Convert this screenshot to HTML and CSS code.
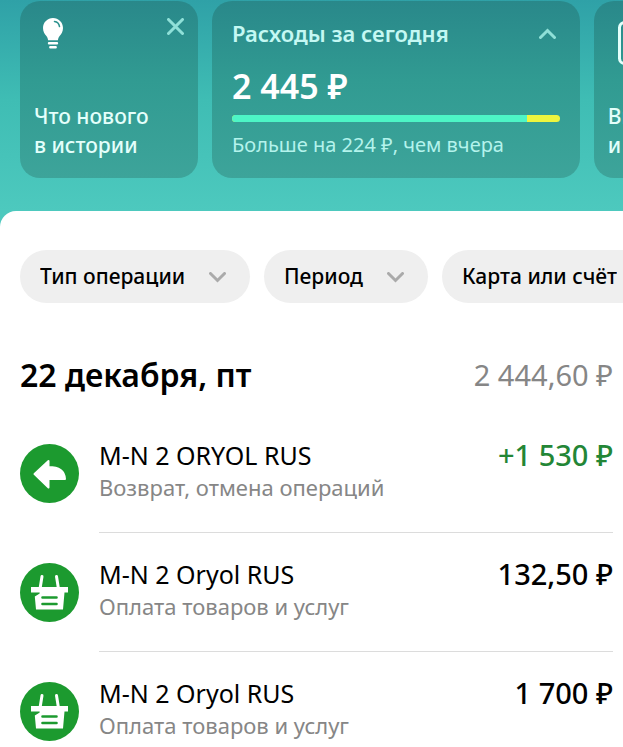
FILE: index.html
```html
<!DOCTYPE html>
<html lang="ru">
<head>
    <meta charset="UTF-8">
    <meta name="viewport" content="width=device-width, initial-scale=1.0">
    <title>История операций</title>
    <link rel="stylesheet" href="styles.css">
</head>
<body>
    <header class="cards">
        <section class="card story-card">
            <div class="card-top">
                <svg class="bulb" viewBox="0 0 20 31" aria-hidden="true">
                    <path fill="#fff" d="M10 0C4.500 0 0 4.400 0 9.900c0 3.900 1.700 5.900 3.400 8 1 1.300 1.500 2.600 1.700 4.400h9.800c.2-1.800.7-3.100 1.700-4.400 1.700-2.100 3.400-4.100 3.400-8C20 4.400 15.500 0 10 0z"/>
                    <path stroke="#2b918d" stroke-width="1.500" stroke-linecap="round" fill="none" d="M11.500 3.600c2.700.4 4.600 2.300 5 5"/>
                    <path stroke="#fff" stroke-width="2.400" stroke-linecap="round" d="M6 25.300h8M7.300 29.200h5.400"/>
                </svg>
                <button class="icon-button" aria-label="Закрыть">
                    <svg width="17" height="17" viewBox="0 0 17 17" aria-hidden="true">
                        <path d="M1.500 1.500l14 14M15.500 1.500l-14 14"/>
                    </svg>
                </button>
            </div>
            <p class="card-text">Что нового<br>в истории</p>
        </section>

        <section class="card spending-card">
            <div class="spending-head">
                <h2>Расходы за сегодня</h2>
                <button class="icon-button" aria-label="Свернуть">
                    <svg width="17" height="11" viewBox="0 0 17 11" aria-hidden="true">
                        <path d="M1.500 9.500l7-7 7 7"/>
                    </svg>
                </button>
            </div>
            <p class="spending-sum">2 445 ₽</p>
            <div class="bar"><div class="bar-fill"></div></div>
            <p class="spending-note">Больше на 224 ₽, чем вчера</p>
        </section>

        <section class="card story-card">
            <div class="card-top">
                <svg class="doc" viewBox="0 0 36 46" aria-hidden="true">
                    <rect x="1.500" y="1.500" width="33" height="41" rx="5"/>
                </svg>
            </div>
            <p class="card-text">Выписки<br>и справки</p>
        </section>
    </header>

    <main class="sheet">
        <div class="filters">
            <div class="chip">
                <select aria-label="Тип операции">
                    <option>Тип операции</option>
                </select>
                <svg width="17" height="11" viewBox="0 0 17 11" aria-hidden="true"><path d="M1.500 1.500l7 7 7-7"/></svg>
            </div>
            <div class="chip">
                <select aria-label="Период">
                    <option>Период</option>
                </select>
                <svg width="17" height="11" viewBox="0 0 17 11" aria-hidden="true"><path d="M1.500 1.500l7 7 7-7"/></svg>
            </div>
            <div class="chip">
                <select aria-label="Карта или счёт">
                    <option>Карта или счёт</option>
                </select>
                <svg width="17" height="11" viewBox="0 0 17 11" aria-hidden="true"><path d="M1.500 1.500l7 7 7-7"/></svg>
            </div>
        </div>

        <div class="day">
            <h1>22 декабря, пт</h1>
            <span class="day-total">2 444,60 ₽</span>
        </div>

        <ul class="operations">
            <li class="operation">
                <svg class="operation-icon" viewBox="0 0 59 59" aria-hidden="true">
                    <circle cx="29.500" cy="29.500" r="29.500" fill="#1c9a2f"/>
                    <path fill="#fff" stroke="#fff" stroke-width="2" stroke-linejoin="round" d="M28.500 17L14.500 30l14 13.500v-8.500H45c-.4-7.500-6-12-16.500-12z"/>
                </svg>
                <div class="operation-body">
                    <div class="operation-info">
                        <p class="operation-name">M-N 2 ORYOL RUS</p>
                        <p class="operation-type">Возврат, отмена операций</p>
                    </div>
                    <span class="amount income">+1 530 ₽</span>
                </div>
            </li>
            <li class="operation">
                <svg class="operation-icon" viewBox="0 0 59 59" aria-hidden="true">
                    <circle cx="29.500" cy="29.500" r="29.500" fill="#1c9a2f"/>
                    <path stroke="#fff" stroke-width="3" stroke-linecap="round" d="M22 13.500L20 26M36.500 13.500l2 12.500"/>
                    <path fill="#fff" d="M11 24h37v5.500h-3.500L43 46.500H16L14.800 33.500l4.500-2.800c.8-.6.500-1.200-.5-1.200H11z"/>
                    <path stroke="#1c9a2f" stroke-width="2.600" stroke-linecap="round" d="M22.500 34.500h14M22.500 41h14"/>
                </svg>
                <div class="operation-body">
                    <div class="operation-info">
                        <p class="operation-name">M-N 2 Oryol RUS</p>
                        <p class="operation-type">Оплата товаров и услуг</p>
                    </div>
                    <span class="amount">132,50 ₽</span>
                </div>
            </li>
            <li class="operation">
                <svg class="operation-icon" viewBox="0 0 59 59" aria-hidden="true">
                    <circle cx="29.500" cy="29.500" r="29.500" fill="#1c9a2f"/>
                    <path stroke="#fff" stroke-width="3" stroke-linecap="round" d="M22 13.500L20 26M36.500 13.500l2 12.500"/>
                    <path fill="#fff" d="M11 24h37v5.500h-3.500L43 46.500H16L14.800 33.500l4.500-2.800c.8-.6.500-1.200-.5-1.200H11z"/>
                    <path stroke="#1c9a2f" stroke-width="2.600" stroke-linecap="round" d="M22.500 34.500h14M22.500 41h14"/>
                </svg>
                <div class="operation-body">
                    <div class="operation-info">
                        <p class="operation-name">M-N 2 Oryol RUS</p>
                        <p class="operation-type">Оплата товаров и услуг</p>
                    </div>
                    <span class="amount">1 700 ₽</span>
                </div>
            </li>
        </ul>
    </main>
</body>
</html>
```
FILE: styles.css
```css
* {
    box-sizing: border-box;
}

body {
    margin: 0;
    font-family: "Noto Sans", sans-serif;
    color: #000;
    background: #fff linear-gradient(#2fa1a7, #3fbdb4 100px, #4dc9be 211px) no-repeat;
    background-size: 100% 230px;
}

h1, h2, p, ul {
    margin: 0;
    padding: 0;
}

button {
    padding: 0;
    border: none;
    background: none;
    cursor: pointer;
}

/* Top cards */
.cards {
    display: flex;
    gap: 14px;
    padding: 1px 0 33px 20px;
    overflow: hidden;
}

.card {
    flex-shrink: 0;
    border-radius: 20px;
    background: linear-gradient(#29888a, #319b92 80px, #3da49a);
    color: #e4fffb;
}

.story-card {
    display: flex;
    flex-direction: column;
    justify-content: space-between;
    width: 178px;
    padding: 17px 14px 18px;
}

.card-top {
    display: flex;
    justify-content: space-between;
    align-items: flex-start;
}

.bulb {
    width: 20px;
    height: 31px;
    margin-left: 9px;
}

.doc {
    width: 36px;
    height: 46px;
    margin: 3px 0 0 10px;
    fill: none;
    stroke: #e4fffb;
    stroke-width: 3;
}

.icon-button {
    display: flex;
}

.icon-button path {
    fill: none;
    stroke: #8fe0d8;
    stroke-width: 3;
    stroke-linecap: round;
}

.card-text {
    font-size: 21px;
    font-weight: 500;
    line-height: 29px;
    white-space: nowrap;
}

.spending-card {
    width: 61%;
    padding: 16px 20px;
}

.spending-head {
    display: flex;
    justify-content: space-between;
    align-items: center;
    padding-right: 4px;
}

.spending-head h2 {
    font-size: 22px;
    font-weight: 600;
    line-height: 32px;
    color: #c4f8f3;
}

.spending-sum {
    margin: 15px 0 7px;
    font-size: 34px;
    font-weight: 600;
    line-height: 44px;
    color: #fff;
}

.bar {
    height: 7px;
    border-radius: 4px;
    background: #edf53f;
    overflow: hidden;
}

.bar-fill {
    width: 90%;
    height: 100%;
    background: #4df5c6;
}

.spending-note {
    margin-top: 8px;
    margin-bottom: 2px;
    font-size: 20px;
    line-height: 30px;
    color: #b4f3ec;
}

/* Operations list */
.sheet {
    padding: 39px 10px 0 20px;
    border-radius: 16px 0 0 0;
    background: #fff;
}

.filters {
    display: flex;
    gap: 14px;
    margin-right: -10px;
    overflow: hidden;
}

.chip {
    display: grid;
    flex-shrink: 0;
    align-items: center;
}

.chip select,
.chip svg {
    grid-area: 1 / 1;
}

.chip select {
    appearance: none;
    height: 53px;
    padding: 0 64px 2px 20px;
    border: none;
    border-radius: 27px;
    background: #efefef;
    color: #000;
    font-family: inherit;
    font-size: 21px;
    font-weight: 500;
}

.chip svg {
    justify-self: end;
    margin: 2px 24px 0 0;
    pointer-events: none;
}

.chip path {
    fill: none;
    stroke: #aaa;
    stroke-width: 3;
    stroke-linecap: round;
}

.day {
    display: flex;
    justify-content: space-between;
    align-items: center;
    margin: 50px 0 17px;
    line-height: 44px;
}

.day h1 {
    font-size: 32px;
    font-weight: 600;
}

.day-total {
    font-size: 29px;
    color: #868686;
}

.operations {
    list-style: none;
}

.operation {
    display: flex;
    gap: 20px;
}

.operation-icon {
    flex-shrink: 0;
    width: 59px;
    height: 59px;
    margin-top: 30px;
}

.operation-body {
    display: flex;
    flex: 1;
    justify-content: space-between;
    align-items: flex-start;
    padding: 24px 0 30px;
    border-bottom: 1px solid #dcdcdc;
}

.operation:last-child .operation-body {
    padding-bottom: 0;
    border-bottom: none;
}

.operation-name {
    font-size: 25px;
    line-height: 34px;
}

.operation-type {
    font-size: 22px;
    line-height: 30px;
    color: #868686;
}

.amount {
    font-size: 29px;
    font-weight: 500;
    line-height: 34px;
    white-space: nowrap;
}

.income {
    color: #238636;
}
```
